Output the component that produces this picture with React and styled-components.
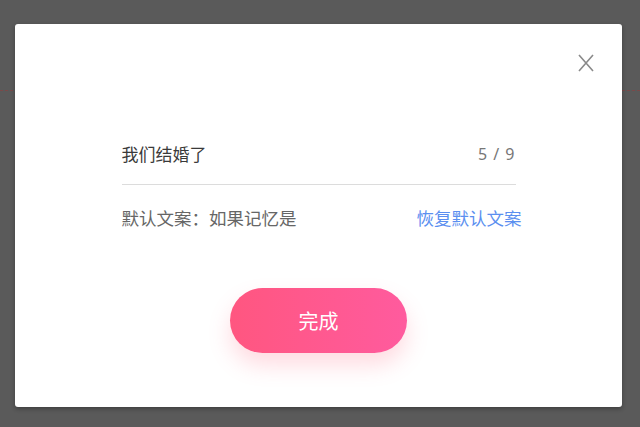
import React, { useState } from 'react';
import styled, { createGlobalStyle } from 'styled-components';

const GlobalStyle = createGlobalStyle`
  html, body {
    margin: 0;
    padding: 0;
    background: #5a5a5a;
  }
  body {
    font-family: "Noto Sans CJK SC", "Noto Sans", sans-serif;
  }
`;

const Backdrop = styled.div`
  position: relative;
  width: 640px;
  height: 427px;
  background: #5a5a5a;
  padding: 24px 18px 20px 15px;
  box-sizing: border-box;
  overflow: hidden;
`;

const DashedGuide = styled.div`
  position: absolute;
  left: 0;
  right: 0;
  top: 90px;
  border-top: 1px dashed #7a4a4a;
`;

const Modal = styled.div`
  position: relative;
  height: 100%;
  background: #fff;
  border-radius: 3px;
  box-shadow: 0 2px 4px rgba(0, 0, 0, 0.3);
  display: flex;
  flex-direction: column;
  align-items: center;
  padding-top: 115px;
  box-sizing: border-box;
`;

const CloseButton = styled.button`
  position: absolute;
  top: 30px;
  right: 28px;
  width: 16px;
  height: 18px;
  padding: 0;
  border: none;
  background: none;
  cursor: pointer;
`;

const Field = styled.div`
  width: 394px;
  display: flex;
  flex-direction: column;
`;

const InputRow = styled.div`
  display: flex;
  align-items: center;
  justify-content: space-between;
  height: 46px;
  border-bottom: 1px solid #dcdcdc;
  box-sizing: border-box;
  padding-bottom: 16px;
`;

const Input = styled.input`
  flex: 1;
  border: none;
  outline: none;
  padding: 0;
  font-family: "Noto Sans CJK SC", sans-serif;
  font-size: 17px;
  color: #3a3a3a;
  background: transparent;
`;

const Counter = styled.span`
  font-family: "Noto Sans", sans-serif;
  font-size: 16px;
  color: #777;
  letter-spacing: 1px;
`;

const HintRow = styled.div`
  display: flex;
  align-items: center;
  justify-content: space-between;
  margin-top: 20px;
  margin-right: -6px;
`;

const Hint = styled.span`
  font-size: 17.5px;
  color: #666;
`;

const ResetLink = styled.a`
  font-size: 17.5px;
  color: #5b8ff0;
  cursor: pointer;
`;

const DoneButton = styled.button`
  margin-top: 58px;
  width: 177px;
  height: 65px;
  border: none;
  border-radius: 33px;
  background: linear-gradient(90deg, #ff5680 0%, #ff5b9e 100%);
  box-shadow: 0 12px 22px rgba(255, 90, 120, 0.22);
  color: #fff;
  font-family: "Noto Sans CJK SC", sans-serif;
  font-size: 20px;
  cursor: pointer;
`;

const DEFAULT_TEXT = '如果记忆是';

const App = () => {
  const [text, setText] = useState('我们结婚了');

  return (
    <>
      <GlobalStyle />
      <Backdrop>
        <DashedGuide />
        <Modal>
          <CloseButton aria-label="关闭">
            <svg width="16" height="18" viewBox="0 0 16 18">
              <path d="M1 1 L15 17 M15 1 L1 17" stroke="#8a8a8a" strokeWidth="1.6" fill="none" />
            </svg>
          </CloseButton>
          <Field>
            <InputRow>
              <Input value={text} maxLength={9} onChange={e => setText(e.target.value)} />
              <Counter>{text.length} / 9</Counter>
            </InputRow>
            <HintRow>
              <Hint>默认文案：{DEFAULT_TEXT}</Hint>
              <ResetLink onClick={() => setText(DEFAULT_TEXT)}>恢复默认文案</ResetLink>
            </HintRow>
          </Field>
          <DoneButton>完成</DoneButton>
        </Modal>
      </Backdrop>
    </>
  );
};

export default App;
